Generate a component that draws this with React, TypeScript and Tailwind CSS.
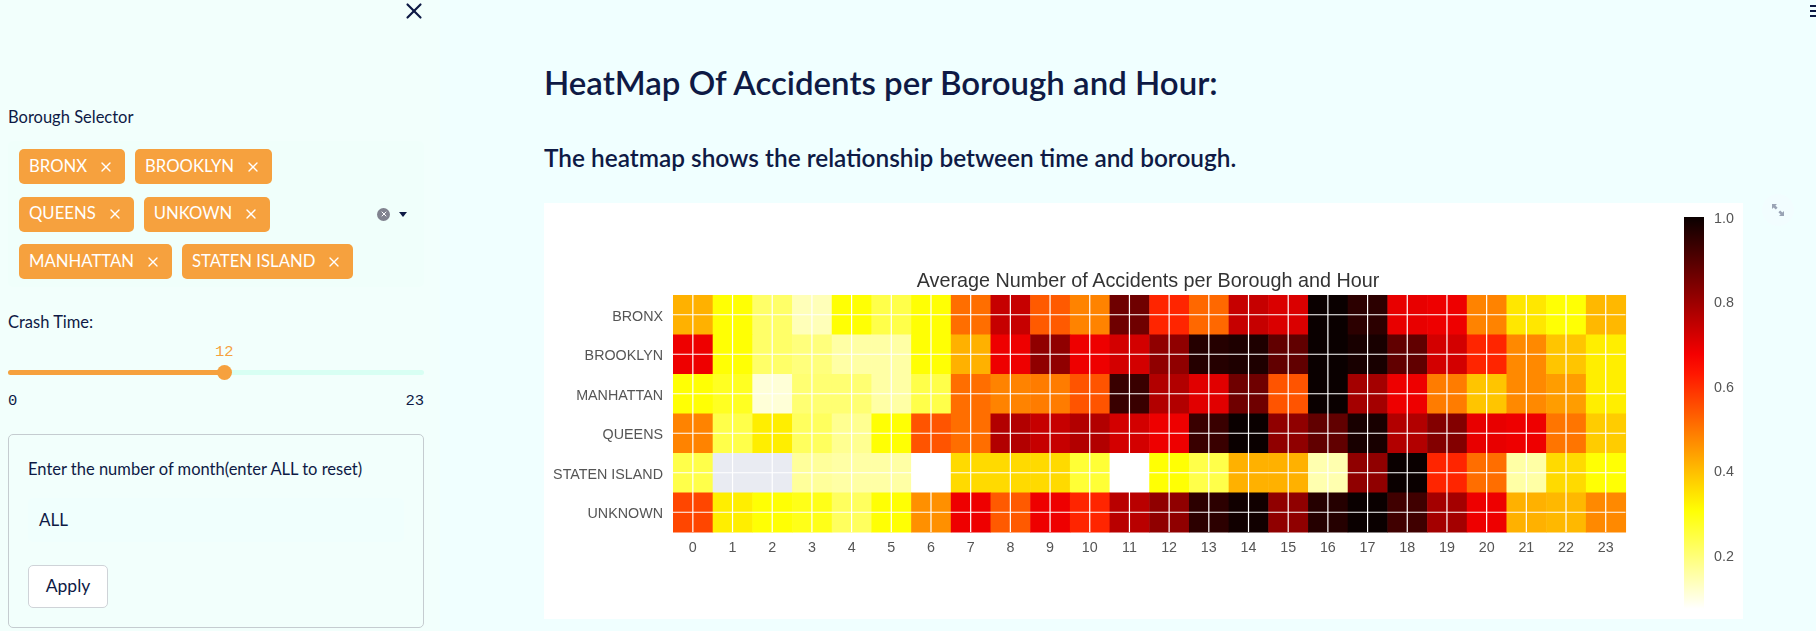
import React from 'react';
import { X } from 'lucide-react';

const boroughs = ['BRONX', 'BROOKLYN', 'MANHATTAN', 'QUEENS', 'STATEN ISLAND', 'UNKNOWN'];
const hours = Array.from({ length: 24 }, (_, i) => i);

// -1 = no data
const matrix = [
  [.37, .25, .15, .07, .25, .18, .25, .47, .72, .5, .44, .85, .58, .48, .72, .69, 1, .95, .67, .66, .44, .29, .25, .36],
  [.66, .25, .15, .13, .09, .09, .25, .37, .66, .8, .66, .7, .8, .96, .97, .87, 1, .98, .87, .7, .58, .43, .34, .28],
  [.25, .22, .04, .14, .14, .09, .18, .47, .44, .45, .51, .93, .75, .68, .85, .51, 1, .77, .66, .45, .34, .43, .4, .28],
  [.44, .18, .28, .16, .11, .25, .51, .47, .75, .72, .75, .7, .66, .93, 1, .8, .87, .98, .75, .82, .67, .66, .46, .33],
  [.18, -1, -1, .1, .09, .09, 0, .31, .31, .31, .2, 0, .25, .18, .37, .37, .08, .8, 1, .58, .47, .09, .31, .25],
  [.53, .28, .25, .23, .16, .25, .42, .66, .5, .66, .58, .74, .8, .95, .99, .8, .96, 1, .92, .77, .66, .37, .36, .43],
];

// matplotlib hot_r
const hot = (t: number) => {
  if (t < 0) return '#e9ebf2';
  const b = Math.max(0, 1 - t / 0.254);
  const g = t < 0.254 ? 1 : Math.max(0, 1 - (t - 0.254) / 0.381);
  const r = t < 0.635 ? 1 : 1 - ((t - 0.635) / 0.365) * 0.96;
  return `rgb(${Math.round(r * 255)},${Math.round(g * 255)},${Math.round(b * 255)})`;
};

const Tag = ({ label }: { label: string }) => (
  <span className="flex h-[35px] items-center gap-[11px] rounded-[5px] bg-[#f6a13e] pl-[10px] pr-[11px] text-[16.7px] text-white">
    {label}
    <X size={16} strokeWidth={2} />
  </span>
);

const Heatmap = () => {
  const left = 129;
  const top = 92;
  const cw = 39.69;
  const ch = 39.5;
  return (
    <svg width="1199" height="416" className="block blur-[0.4px]" fontFamily="'Liberation Sans', Arial, sans-serif">
      <defs>
        <linearGradient id="bar" x1="0" y1="1" x2="0" y2="0">
          {Array.from({ length: 21 }, (_, i) => (
            <stop key={i} offset={i / 20} stopColor={hot(i / 20)} />
          ))}
        </linearGradient>
      </defs>
      <text x={604} y={84} textAnchor="middle" fontSize="19.8" fill="#333">Average Number of Accidents per Borough and Hour</text>
      {matrix.map((row, y) =>
        row.map((v, x) => (
          <rect key={`${x}-${y}`} x={left + x * cw} y={top + y * ch} width={cw + 0.5} height={ch + 0.5} fill={hot(v)} />
        ))
      )}
      {hours.map((h) => (
        <g key={h}>
          <line x1={left + (h + 0.5) * cw} x2={left + (h + 0.5) * cw} y1={top} y2={top + 6 * ch} stroke="#fff" strokeWidth="1.2" />
          <text x={left + (h + 0.5) * cw} y={349} textAnchor="middle" fontSize="14.3" fill="#555">{h}</text>
        </g>
      ))}
      {boroughs.map((b, i) => (
        <g key={b}>
          <line x1={left} x2={left + 24 * cw} y1={top + (i + 0.5) * ch} y2={top + (i + 0.5) * ch} stroke="#fff" strokeWidth="1.2" />
          <text x={119} y={top + (i + 0.5) * ch + 6} textAnchor="end" fontSize="14.3" fill="#555">{b}</text>
        </g>
      ))}
      <rect x={1140} y={14} width={20} height={392} fill="url(#bar)" />
      {[['1.0', 20], ['0.8', 104], ['0.6', 189], ['0.4', 273], ['0.2', 358]].map(([t, y]) => (
        <text key={t} x={1170} y={Number(y)} fontSize="14.3" fill="#555">{t}</text>
      ))}
    </svg>
  );
};

export default function App() {
  return (
    <div className="flex h-[631px] w-[1816px] overflow-hidden bg-[#f0ffff] font-['Lato','Noto_Sans',sans-serif] text-[#0e1a45]">
      <aside className="flex w-[440px] shrink-0 flex-col bg-[#f2fffc] pl-[8px] pr-[16px]">
        <div className="flex h-[92px] justify-end">
          <X size={26} strokeWidth={2} className="mr-[-3px] mt-[-2px]" />
        </div>
        <label className="mt-[14px] text-[16.5px] leading-[22px]">Borough Selector</label>
        <div className="mt-[13px] flex items-center rounded-[5px] bg-[#f0fffb] pl-[11px] pr-[17px]">
          <div className="flex flex-1 flex-col gap-[12.5px] py-[8px]">
            <div className="flex gap-[10px]"><Tag label="BRONX" /><Tag label="BROOKLYN" /></div>
            <div className="flex gap-[10px]"><Tag label="QUEENS" /><Tag label="UNKOWN" /></div>
            <div className="flex gap-[10px]"><Tag label="MANHATTAN" /><Tag label="STATEN ISLAND" /></div>
          </div>
          <span className="flex h-[13px] w-[13px] items-center justify-center rounded-full bg-[#81838f]">
            <X size={8} strokeWidth={3} className="text-white" />
          </span>
          <span className="ml-[9px] h-0 w-0 border-x-[4.5px] border-t-[5px] border-x-transparent border-t-[#0e1a45]" />
        </div>
        <label className="mt-[24px] text-[16.5px] leading-[22px]">Crash Time:</label>
        <div className="mt-[10px] pl-[207px] font-['Liberation_Mono',monospace] text-[15.5px] leading-[18px] text-[#f6a13e]">12</div>
        <div className="relative mt-[9px] h-[5px] rounded-full bg-[#d8fff3]">
          <div className="h-full w-[217px] rounded-full bg-[#f6a13e]" />
          <span className="absolute left-[209px] top-[-5px] h-[15px] w-[15px] rounded-full bg-[#f6a13e]" />
        </div>
        <div className="mt-[16px] flex justify-between font-['Liberation_Mono',monospace] text-[15.5px] leading-[20px]">
          <span>0</span><span>23</span>
        </div>
        <form className="mt-[23px] flex h-[194px] flex-col rounded-[5px] border border-[#c5ccd0] px-[19px] pt-[23px]">
          <label className="text-[16.5px] leading-[22px]">Enter the number of month(enter ALL to reset)</label>
          <div className="mt-[18px] flex h-[44px] items-center rounded-[5px] bg-[#f0fffd] px-[11px] text-[17px]">ALL</div>
          <button type="button" className="mt-[23px] h-[43px] w-[80px] rounded-[5px] border border-[#cfd3d8] bg-white text-[17.5px]">Apply</button>
        </form>
      </aside>
      <main className="relative min-w-0 flex-1 pl-[104px]">
        <h1 className="mt-[58px] text-[33px] font-semibold leading-[48px]">HeatMap Of Accidents per Borough and Hour:</h1>
        <h3 className="mt-[36px] text-[24.4px] font-semibold leading-[32px]">The heatmap shows the relationship between time and borough.</h3>
        <div className="mt-[29px] flex items-start gap-[19px]">
          <div className="w-[1199px] shrink-0 bg-white">
            <Heatmap />
          </div>
          <span className="mt-[-9px] flex h-[32px] w-[32px] shrink-0 items-center justify-center rounded-full bg-[#f2fdff]">
            <svg width="14" height="14" viewBox="0 0 14 14" fill="#9aa3b5">
              <path d="M1 1h5L4.4 2.6 6.6 4.8 4.8 6.6 2.6 4.4 1 6z" />
              <path d="M13 13H8l1.6-1.6-2.2-2.2 1.8-1.8 2.2 2.2L13 8z" />
            </svg>
          </span>
        </div>
        <div className="absolute right-[-6px] top-[5px] flex h-[12px] w-[12px] flex-col justify-between">
          <span className="h-[2px] bg-[#0e1a45]" />
          <span className="h-[2px] bg-[#0e1a45]" />
          <span className="h-[2px] bg-[#0e1a45]" />
        </div>
      </main>
    </div>
  );
}
